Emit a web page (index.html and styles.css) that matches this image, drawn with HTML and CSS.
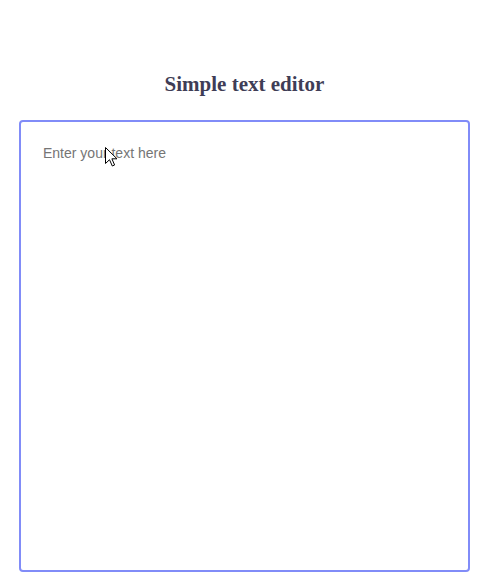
FILE: index.html
```html
<!DOCTYPE html>
<html lang="en">
<head>
<meta charset="utf-8">
<title>Simple text editor</title>
<link rel="stylesheet" href="styles.css">
</head>
<body>
<main class="wrap">
  <h1 class="title">Simple text editor</h1>
  <div class="editor">
    <textarea class="area" placeholder="Enter your text here"></textarea>
    <svg class="cursor" width="13" height="20" viewBox="0 0 13 20" aria-hidden="true">
      <path d="M0.5 0.5 L0.5 16.5 L4.5 12.7 L7.3 19 L9.6 18 L6.9 11.8 L12 11.8 Z" fill="#fff" stroke="#000" stroke-width="1" stroke-linejoin="miter"/>
    </svg>
  </div>
</main>
</body>
</html>
```

FILE: styles.css
```css
html, body {
  margin: 0;
  padding: 0;
  background: #ffffff;
}

.wrap {
  width: 451px;
  padding-top: 73px;
  margin-left: 19px;
}

.title {
  margin: 0 0 24px;
  font-family: "Liberation Serif", "Times New Roman", serif;
  font-size: 21px;
  line-height: 23px;
  font-weight: bold;
  color: #3f3d56;
  text-align: center;
}

.editor {
  position: relative;
}

.area {
  display: block;
  box-sizing: border-box;
  width: 451px;
  height: 452px;
  margin: 0;
  padding: 23px 22px;
  border: 2px solid #818cf8;
  border-radius: 4px;
  outline: none;
  resize: none;
  font-family: "Liberation Sans", Arial, sans-serif;
  font-size: 14px;
  line-height: 16px;
  color: #333;
  background: #fff;
}

.area::placeholder {
  color: #757575;
  opacity: 1;
}

.cursor {
  position: absolute;
  left: 86px;
  top: 27px;
}
```
